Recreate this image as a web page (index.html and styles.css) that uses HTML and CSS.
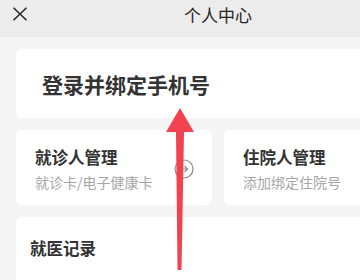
FILE: index.html
```html
<!DOCTYPE html>
<html lang="zh-CN">
<head>
<meta charset="utf-8">
<link rel="stylesheet" href="styles.css">
</head>
<body>
<div class="page">
  <header class="nav">
    <svg class="close" width="16" height="14" viewBox="0 0 16 14"><path d="M1.5 0.8 L14.5 13.2 M14.5 0.8 L1.5 13.2" stroke="#222" stroke-width="1.5" fill="none"/></svg>
    <div class="title">个人中心</div>
  </header>
  <main class="content">
    <section class="card login">登录并绑定手机号</section>
    <div class="row">
      <section class="card item">
        <div class="item-title">就诊人管理</div>
        <div class="item-sub">就诊卡/电子健康卡</div>
        <svg class="go" width="20" height="20" viewBox="0 0 20 20"><circle cx="10" cy="10" r="9" stroke="#8a8a8a" stroke-width="1.2" fill="none"/><path d="M6 10 H13.5 M10.5 7 L13.5 10 L10.5 13" stroke="#8a8a8a" stroke-width="1.2" fill="none"/></svg>
      </section>
      <section class="card item">
        <div class="item-title">住院人管理</div>
        <div class="item-sub">添加绑定住院号</div>
      </section>
    </div>
    <section class="card records">
      <div class="item-title">就医记录</div>
    </section>
  </main>
  <svg class="arrow" width="40" height="170" viewBox="0 0 40 170"><path d="M20 0 L34 24 L24 24 L21.5 162 L17.5 162 L16 24 L6 24 Z" fill="#f2424f"/></svg>
</div>
</body>
</html>
```
FILE: styles.css
```css
html, body { margin: 0; padding: 0; }
html { width: 360px; height: 280px; overflow: hidden; background: #f5f5f5; }
body { width: 436px; font-family: "Noto Sans CJK SC", "Noto Sans", sans-serif; color: #333; }
.page { position: relative; width: 436px; height: 280px; overflow: hidden; background: #f5f5f5; }
.nav { height: 37px; background: #ececec; display: flex; align-items: center; justify-content: center; position: relative; }
.close { position: absolute; left: 12px; top: 7px; }
.title { font-size: 17px; color: #222; line-height: 1; margin-top: -9px; }
.content { padding: 12px 16px 0; display: flex; flex-direction: column; gap: 12px; }
.card { background: #fff; border-radius: 6px; box-sizing: border-box; }
.login { height: 69px; display: flex; align-items: center; padding-left: 26px; font-size: 21px; font-weight: 700; color: #333; }
.row { display: flex; gap: 12px; }
.item { flex: 1; height: 75px; padding: 17px 0 0 19px; position: relative; }
.item-title { font-size: 16.5px; font-weight: 700; color: #333; line-height: 20px; }
.item-sub { font-size: 14px; color: #a6a6a6; line-height: 18px; margin-top: 6px; }
.go { position: absolute; left: 158px; top: 29px; }
.records { height: 80px; padding: 21px 0 0 14px; }
.arrow { position: absolute; left: 160px; top: 108px; }
```
